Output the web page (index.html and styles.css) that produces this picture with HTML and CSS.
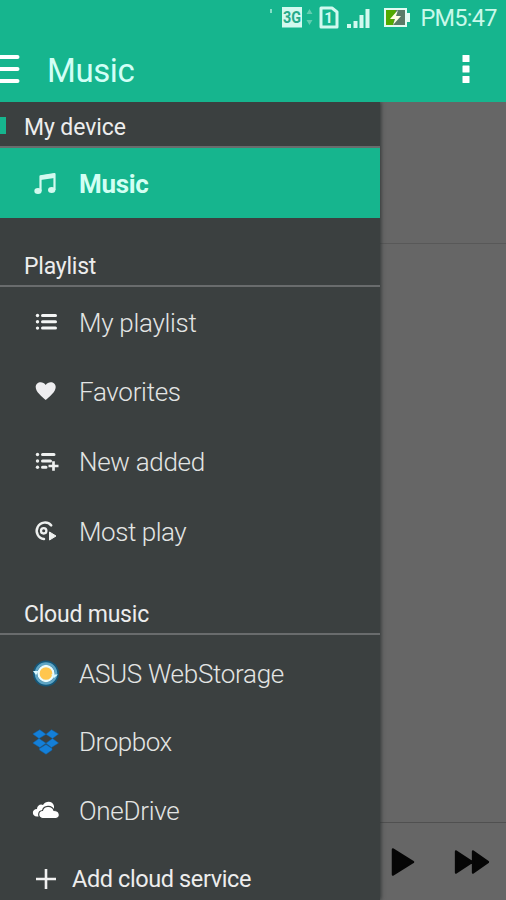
FILE: index.html
```html
<!DOCTYPE html>
<html lang="en">
<head>
<meta charset="utf-8">
<title>Music</title>
<link rel="stylesheet" href="styles.css">
</head>
<body>
<div class="screen">
  <header class="header">
    <div class="status">
      <svg class="status-icons" width="152" height="36" viewBox="0 0 152 36">
        <path d="M11 9v4" stroke="#c4f5e6" stroke-width="1.3"/>
        <rect x="22" y="7" width="20" height="20.500" fill="#d2f9ef"/>
        <text class="network" x="32" y="23" text-anchor="middle" textLength="18" lengthAdjust="spacingAndGlyphs">3G</text>
        <path d="M46.500 14l3-5 3 5zM46.500 20h6l-3 5z" fill="#61ceb0"/>
        <path d="M61 8h11l5 4v15H61z" fill="none" stroke="#d2f9ef" stroke-width="3" stroke-linejoin="round"/>
        <text class="sim" x="68.500" y="23" text-anchor="middle">1</text>
        <path d="M87 24h4v4h-4zM93.500 21h4v7h-4zM99.500 15h4v13h-4zM105.500 9h4v19h-4z" fill="#d2f9ef"/>
        <rect x="125" y="9" width="21" height="17" fill="#5a7b67" stroke="#e3fbf2" stroke-width="2"/>
        <path d="M126 10h10l-3 15h-7z" fill="#53a900"/>
        <path d="M147 13h3v9h-3z" fill="#e3fbf2"/>
        <path d="M138 10l-8 9h5l-2 6 8-9h-5z" fill="#ffffe2"/>
      </svg>
      <span class="clock">PM5:47</span>
    </div>
    <div class="action-bar">
      <svg class="menu" width="20" height="30" viewBox="0 0 20 30"><path d="M-2 3H17.500M-2 15H17.500M-2 27H17.500" stroke="#fff" stroke-width="4" stroke-linecap="round"/></svg>
      <h1 class="title">Music</h1>
      <svg class="overflow" width="8" height="30" viewBox="0 0 8 30" fill="#fff"><rect x=".5" y="1" width="7" height="7" rx=".6"/><rect x=".5" y="11.500" width="7" height="7" rx=".6"/><rect x=".5" y="22" width="7" height="7" rx=".6"/></svg>
    </div>
  </header>
  <div class="body">
    <nav class="drawer">
      <h2 class="section device"><i class="marker"></i><span>My device</span></h2>
      <div class="row selected">
        <svg class="icon" width="28" height="28" viewBox="0 0 28 28"><path d="M8.500 21V6.300L22.500 4.200V20" fill="none" stroke="#d2f9ef" stroke-width="2.200" stroke-linejoin="round"/><path d="M8.500 5.500L22.500 3.500V8L8.500 10z" fill="#d2f9ef"/><ellipse cx="6" cy="21" rx="3.700" ry="2.900" fill="#d2f9ef"/><ellipse cx="19.700" cy="20" rx="3.700" ry="2.900" fill="#d2f9ef"/></svg>
        <span>Music</span>
      </div>
      <h2 class="section"><span>Playlist</span></h2>
      <div class="rows">
        <div class="row">
          <svg class="icon" width="28" height="28" viewBox="0 0 28 28"><path d="M10.500 6.500h13M10.500 12.800h13M10.500 19.100h13" stroke="#f4f6f5" stroke-width="3" stroke-linecap="round"/><g fill="#f4f6f5"><circle cx="5.500" cy="6.500" r="1.700"/><circle cx="5.500" cy="12.800" r="1.700"/><circle cx="5.500" cy="19.100" r="1.700"/></g></svg>
          <span>My playlist</span>
        </div>
        <div class="row">
          <svg class="icon" width="28" height="28" viewBox="0 0 28 28"><path d="M13.700 22C10 18.500 3.700 14 3.700 9C3.700 3.500 11 2.500 13.700 7C16.400 2.500 23.700 3.500 23.700 9C23.700 14 17.500 18.500 13.700 22z" fill="#eeeef0"/></svg>
          <span>Favorites</span>
        </div>
        <div class="row">
          <svg class="icon" width="28" height="28" viewBox="0 0 28 28"><path d="M10.500 6.500h11.500M10.500 13h8M10.500 19.300h3.500" stroke="#eef0ef" stroke-width="3" stroke-linecap="round"/><path d="M21.500 13.200v9.600M16.500 18h10" stroke="#eef0ef" stroke-width="2.700"/><g fill="#eef0ef"><circle cx="5.500" cy="6.500" r="1.700"/><circle cx="5.500" cy="13" r="1.700"/><circle cx="5.500" cy="19.300" r="1.700"/></g></svg>
          <span>New added</span>
        </div>
        <div class="row">
          <svg class="icon" width="28" height="28" viewBox="0 0 28 28"><path d="M19.200 7.300A8.300 8.300 0 1 0 12 21.100" fill="none" stroke="#eef0ef" stroke-width="2.500" stroke-linecap="round"/><circle cx="11.700" cy="12.800" r="2.700" fill="none" stroke="#eef0ef" stroke-width="2.300"/><path d="M17.500 14L24 18L17.500 22z" fill="#eef0ef" stroke="#eef0ef" stroke-linejoin="round"/></svg>
          <span class="tight">Most play</span>
        </div>
      </div>
      <h2 class="section"><span>Cloud music</span></h2>
      <div class="rows cloud">
        <div class="row">
          <svg class="icon" width="28" height="28" viewBox="0 0 28 28"><circle cx="14" cy="13.500" r="13" fill="#155779"/><circle cx="14" cy="13.500" r="10" fill="none" stroke="#5fa6c6" stroke-width="2.500"/><circle cx="14" cy="13.500" r="7.500" fill="#ffc64d" stroke="#e9fcff" stroke-width="2.300"/><path d="M1 11h6l-3 4zM19 14.500h7l-4 3.500z" fill="#d9f8ff"/></svg>
          <span>ASUS WebStorage</span>
        </div>
        <div class="row">
          <svg class="icon" width="28" height="28" viewBox="0 0 28 28" fill="#147fd8"><path d="M7.800 1.700L14 6.300L7 10.500L.8 6zM19.500 1.700L26.500 6L20.500 10.500L14 6.300zM7 10.500L14 15.200L7.800 19.500L.8 15zM20.500 10.500L26.500 15L19.500 19.500L14 15.200zM14 16.600L20 20.500V22L14 26.200L7.500 22V20.500z" stroke="#0d64ac" stroke-width=".5"/></svg>
          <span class="tight">Dropbox</span>
        </div>
        <div class="row">
          <svg class="icon" width="28" height="28" viewBox="0 0 28 28"><path d="M5 19.500C-.5 19.500-.5 12 5 12C5 8 9 6.500 11 8C14 3 21 4 22 9V19.500z" fill="#fff"/><path d="M10.500 21.500C5.300 21 5.500 14 10.500 13.500C11.500 8.500 20 7.500 22 13.500C28.500 13.500 29 21 24 21.500z" fill="#fff" stroke="#3b4040" stroke-width="1.200"/></svg>
          <span>OneDrive</span>
        </div>
        <div class="row add">
          <svg class="icon" width="28" height="28" viewBox="0 0 28 28"><path d="M14 4v20M4 14h20" stroke="#f1f1f1" stroke-width="2.600"/></svg>
          <span>Add cloud service</span>
        </div>
      </div>
    </nav>
    <main class="content">
      <div class="album"></div>
      <div class="tracks"></div>
      <div class="player">
        <svg width="24" height="30" viewBox="0 0 24 30"><path d="M2 2.500L22 15L2 27.500z" fill="#060606" stroke="#060606" stroke-width="2.500" stroke-linejoin="round"/></svg>
        <svg width="36" height="26" viewBox="0 0 36 26"><path d="M2 2.500L18 13L2 23.500zM19 2.500L34 13L19 23.500z" fill="#060606" stroke="#060606" stroke-width="2.300" stroke-linejoin="round"/></svg>
      </div>
    </main>
  </div>
</div>
</body>
</html>
```
FILE: styles.css
```css
* { box-sizing: border-box; }

body {
  margin: 0;
  font-family: Roboto, "Liberation Sans", sans-serif;
}

.screen {
  width: 506px;
  height: 900px;
  display: flex;
  flex-direction: column;
  overflow: hidden;
}

svg { display: block; flex: none; }

.header {
  height: 102px;
  flex: none;
  background: #16b58e;
  z-index: 2;
}

.status {
  height: 36px;
  display: flex;
  align-items: center;
  padding-left: 260px;
}

.network { font-size: 16px; font-weight: 700; fill: #27aa8a; }
.sim { font-size: 15px; font-weight: 700; fill: #d2f9ef; }

.clock {
  margin-left: 8.5px;
  font-size: 23.5px;
  letter-spacing: -.75px;
  color: #c9f9ea;
  white-space: nowrap;
}

.action-bar {
  height: 66px;
  display: flex;
  align-items: center;
  padding-right: 36px;
}

.title {
  margin: 0 auto 0 27px;
  padding-top: 3px;
  font-size: 33px;
  font-weight: 400;
  line-height: 40px;
  letter-spacing: -.4px;
  color: #d2fff6;
}

.body {
  flex: 1;
  min-height: 0;
  display: flex;
}

.drawer {
  width: 380px;
  flex: none;
  background: #3b4040;
  box-shadow: 1px 0 4px #303535;
  z-index: 1;
  white-space: nowrap;
}

.section {
  height: 69px;
  margin: 0;
  padding: 35px 0 0 24px;
  border-bottom: 2px solid #696c6d;
  font-size: 23px;
  font-weight: 400;
  line-height: 28px;
  letter-spacing: -.22px;
  color: #ededed;
}

.device {
  height: 46px;
  display: flex;
  align-items: center;
  padding: 7px 0 0;
  letter-spacing: -.1px;
}

.marker {
  width: 6px;
  height: 17px;
  margin: -4px 18px 0 0;
  background: #16b58e;
}

.row {
  height: 69.6px;
  display: flex;
  align-items: center;
  padding-left: 32px;
  font-size: 26px;
  font-weight: 300;
  letter-spacing: -.3px;
  color: #e3e5e4;
}

.tight { letter-spacing: -.45px; }
.icon { margin-right: 19px; }

.selected {
  height: 70px;
  padding-top: 1px;
  background: #16b58e;
  font-weight: 700;
  color: #d2fff3;
}

.rows { height: 279px; padding-top: 1px; }
.cloud { padding-top: 5px; }
.cloud .row { height: 68.3px; }

.cloud .add {
  font-size: 23.5px;
  font-weight: 400;
  letter-spacing: -.4px;
  color: #ededed;
}

.add .icon { margin-right: 12px; }

.content {
  flex: 1;
  display: flex;
  flex-direction: column;
  background: #666;
}

.album { height: 142px; border-bottom: 1px solid #585858; }
.tracks { flex: 1; }

.player {
  height: 78px;
  display: flex;
  align-items: center;
  gap: 39px;
  padding-left: 11px;
  border-top: 1px solid #505050;
}
```
